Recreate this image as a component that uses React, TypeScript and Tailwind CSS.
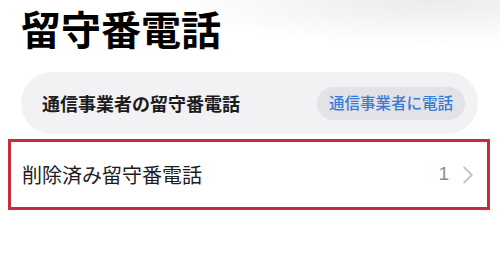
import { ChevronRight } from 'lucide-react';

const JP = "font-['Noto_Sans_CJK_JP','Noto_Sans',sans-serif]";

export default function App() {
  return (
    <div className={`w-[500px] h-[255px] bg-white overflow-hidden ${JP}`}>
      {/* header with the faint blur at top right */}
      <div className="h-[72px] pl-[21px] pt-[4px] bg-[radial-gradient(ellipse_260px_45px_at_430px_0px,#ebebeb,#ffffff)]">
        <h1 className="text-[40px] leading-[48px] font-bold text-black">留守番電話</h1>
      </div>

      {/* carrier voicemail */}
      <div className="ml-[21px] mr-[22px] h-[62px] rounded-full bg-[#f2f2f4] flex items-center justify-between pl-[21px] pr-[13px]">
        <span className="text-[18px] font-bold text-[#1c1c1e]">通信事業者の留守番電話</span>
        <button className="h-[33px] px-[12px] rounded-full bg-[#e2e2e7] text-[15.5px] font-medium text-[#3a7bd5]">
          通信事業者に電話
        </button>
      </div>

      {/* deleted voicemail, highlighted */}
      <div className="mt-[5px] ml-[8px] w-[482px] h-[71px] border-[3px] border-[#c62d3a] flex items-center justify-between pl-[11px] pr-[4px]">
        <span className="text-[20px] text-[#1c1c1e]">削除済み留守番電話</span>
        <div className="flex items-center gap-[4px]">
          <span className="text-[19px] text-[#8e8e93] font-['Liberation_Sans',sans-serif]">1</span>
          <ChevronRight size={30} strokeWidth={1.5} color="#c4c4c7" />
        </div>
      </div>
    </div>
  );
}
